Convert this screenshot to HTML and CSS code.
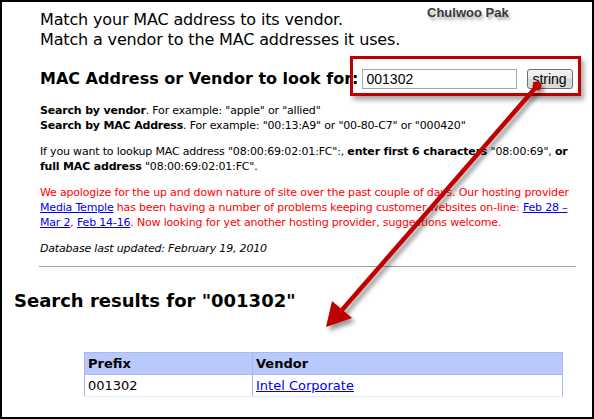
FILE: index.html
```html
<!DOCTYPE html>
<html lang="en">

<head>
  <meta charset="UTF-8">
  <meta name="viewport" content="width=device-width, initial-scale=1.0">
  <title>MAC Address Lookup</title>
  <link rel="stylesheet" href="styles.css">
</head>

<body>
  <div class="frame">
    <div class="intro">
      <p class="tagline">Match your MAC address to its vendor.<br>Match a vendor to the MAC addresses it uses.</p>

      <form class="lookup">
        <label for="q">MAC Address or Vendor to look for:</label>
        <input id="q" type="text" value="001302">
        <button type="button">string</button>
      </form>

      <p class="hint"><b>Search by vendor</b>. For example: "apple" or "allied"<br>
        <b>Search by MAC Address</b>. For example: "00:13:A9" or "00-80-C7" or "000420"</p>

      <p class="hint">If you want to lookup MAC address "08:00:69:02:01:FC":, <b>enter first 6 characters</b> "08:00:69", <b>or<br>
        full MAC address</b> "08:00:69:02:01:FC".</p>

      <p class="notice">We apologize for the up and down nature of site over the past couple of days. Our hosting provider<br>
        <a href="#">Media Temple</a> has been having a number of problems keeping customer websites on-line: <a href="#">Feb 28 &ndash;<br>
        Mar 2</a>, <a href="#">Feb 14-16</a>. Now looking for yet another hosting provider, suggestions welcome.</p>

      <p class="updated">Database last updated: February 19, 2010</p>
    </div>

    <hr>

    <h2 class="results-title">Search results for "001302"</h2>

    <table class="results">
      <thead>
        <tr>
          <th class="col-prefix">Prefix</th>
          <th>Vendor</th>
        </tr>
      </thead>
      <tbody>
        <tr>
          <td>001302</td>
          <td><a href="#">Intel Corporate</a></td>
        </tr>
      </tbody>
    </table>

    <!-- annotation layer -->
    <div class="callout-name">Chulwoo Pak</div>
    <div class="callout-box"></div>
    <svg class="callout-arrow" width="594" height="419" viewBox="0 0 594 419">
      <line x1="537" y1="86" x2="342" y2="310" stroke="#c00000" stroke-width="4.5" />
      <circle cx="537" cy="86" r="4.5" fill="#c00000" />
      <polygon points="326,327 332,301 352,318" fill="#c00000" />
    </svg>
  </div>
</body>

</html>
```

FILE: styles.css
```css
* {
  margin: 0;
  padding: 0;
  box-sizing: border-box;
}

body {
  background: #fff;
  font-family: 'DejaVu Sans', Verdana, sans-serif;
  color: #000;
}

.frame {
  position: relative;
  height: 419px;
  border: 2px solid #000;
  overflow: hidden;
}

.intro {
  padding: 8px 0 0 38px;
}

.tagline {
  font-size: 16px;
  line-height: 20px;
  letter-spacing: -0.15px;
}

.lookup {
  display: flex;
  align-items: center;
  margin-top: 18px;
  height: 21px;
}

.lookup label {
  font-size: 16px;
  font-weight: bold;
  line-height: 20px;
}

.lookup input {
  width: 155px;
  height: 20px;
  margin-left: 3px;
  padding: 0 4px;
  border: 1px solid #a8a8a8;
  font-family: 'Liberation Sans', Arial, sans-serif;
  font-size: 14px;
  color: #000;
}

.lookup button {
  width: 46px;
  height: 20px;
  margin-left: 10px;
  border: 1px solid #707070;
  border-radius: 3px;
  background: linear-gradient(#f4f4f4, #e6e6e6 50%, #d6d6d6 51%, #dcdcdc);
  font-family: 'Liberation Sans', Arial, sans-serif;
  font-size: 14px;
  color: #000;
}

.hint,
.notice,
.updated {
  font-size: 11px;
  line-height: 15px;
  letter-spacing: -0.18px;
  margin-top: 11px;
}

.lookup + .hint {
  margin-top: 14px;
}

.notice {
  color: #f00;
}

.notice a,
.results a {
  color: #00e;
}

.updated {
  font-style: italic;
}

hr {
  margin: 10px 16px 0 37px;
  border: none;
  border-top: 1px solid #a0a0a0;
}

.results-title {
  margin: 22px 0 0 12px;
  font-size: 18px;
  font-weight: bold;
  line-height: 24px;
}

.results {
  width: 479px;
  margin: 39px 0 0 82px;
  border-collapse: collapse;
  border-left: 1px solid #a9b8f2;
  border-right: 1px solid #a9b8f2;
  font-size: 13px;
  text-align: left;
}

.results th,
.results td {
  height: 22px;
  padding: 0 3px;
  border-left: 1px solid #a9b8f2;
}

.results th {
  background: #b9c9fb;
  border-bottom: 1px solid #a9b8f2;
  border-top: 1px solid #a9b8f2;
}

.results td {
  border-bottom: 1px solid #e4e7f8;
}

.col-prefix {
  width: 168px;
}

.callout-name {
  position: absolute;
  top: 3px;
  left: 425px;
  font-family: 'Liberation Sans', Arial, sans-serif;
  font-size: 13px;
  font-weight: bold;
  color: #3a3a3a;
  text-shadow: 2px 3px 3px rgba(0, 0, 0, 0.35);
}

.callout-box {
  position: absolute;
  top: 54px;
  left: 348px;
  width: 231px;
  height: 40px;
  border: 3px solid #c00000;
  box-shadow: 3px 4px 5px rgba(0, 0, 0, 0.35);
}

.callout-arrow {
  position: absolute;
  top: -2px;
  left: -2px;
  filter: drop-shadow(3px 4px 2px rgba(0, 0, 0, 0.4));
}
```
